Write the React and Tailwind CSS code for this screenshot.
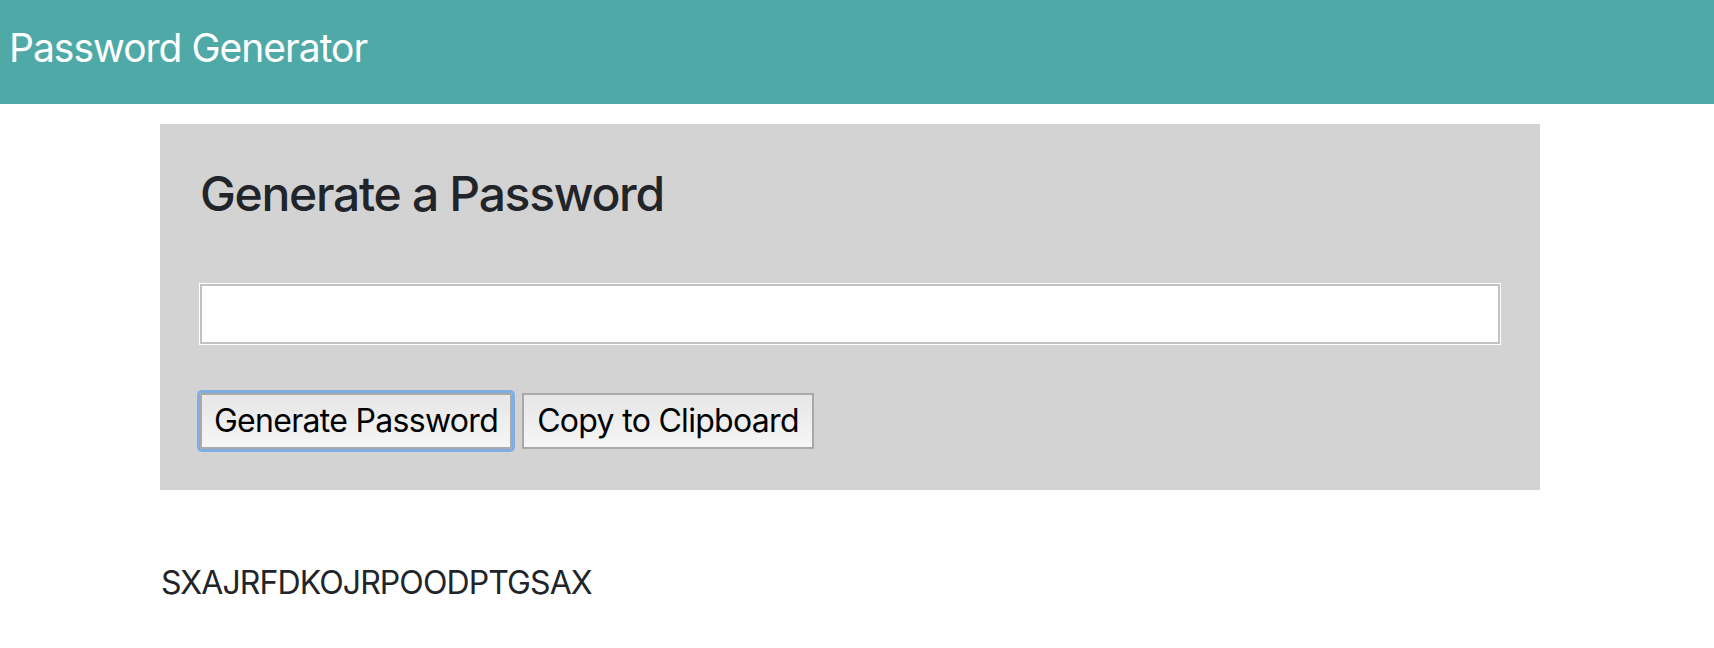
import { useState } from "react";

const CHARS = "ABCDEFGHIJKLMNOPQRSTUVWXYZ";

export default function App() {
  const [password, setPassword] = useState("SXAJRFDKOJRPOODPTGSAX");
  const [field, setField] = useState("");

  const generate = () => {
    let out = "";
    for (let i = 0; i < 21; i++) {
      out += CHARS[Math.floor(Math.random() * CHARS.length)];
    }
    setPassword(out);
  };

  const copy = () => {
    if (navigator.clipboard) navigator.clipboard.writeText(password);
  };

  return (
    <div className="min-h-screen bg-white font-['Inter','Liberation_Sans',sans-serif] text-[#212529]">
      {/* Navbar */}
      <nav className="h-[104px] bg-[#4faaa7] pl-[9px] pt-[28px]">
        <span className="text-[39px] leading-[40px] tracking-[-1px] text-white">
          Password Generator
        </span>
      </nav>

      {/* Generator card */}
      <div className="ml-[160px] mt-[20px] w-[1380px] bg-[#d3d3d3] px-[40px] pb-[41px] pt-[42px]">
        <h4 className="text-[48px] leading-[56px] font-medium tracking-[-1.3px]">
          Generate a Password
        </h4>
        <input
          type="text"
          value={field}
          onChange={(e) => setField(e.target.value)}
          className="mt-[62px] block h-[60px] w-[1300px] border-2 border-[#c2c2c2] bg-white px-3 text-[32px] shadow-[0_0_0_1px_#ffffff] outline-none"
        />
        <div className="mt-[49px] flex items-center gap-[10px]">
          <button
            onClick={generate}
            className="h-[56px] w-[312px] rounded-[2px] border-2 border-[#a9a9a9] bg-gradient-to-b from-[#e6e6e6] to-[#f6f6f6] text-[32px] leading-none tracking-[-0.7px] text-black shadow-[0_0_0_3px_#7eaee3]"
          >
            Generate Password
          </button>
          <button
            onClick={copy}
            className="h-[56px] w-[292px] border-2 border-[#a9a9a9] bg-gradient-to-b from-[#e6e6e6] to-[#f6f6f6] text-[32px] leading-none tracking-[-0.7px] text-black"
          >
            Copy to Clipboard
          </button>
        </div>
      </div>

      {/* Output */}
      <p className="ml-[161px] mt-[69px] text-[32px] leading-[48px] tracking-[-0.9px]">
        {password}
      </p>
    </div>
  );
}
